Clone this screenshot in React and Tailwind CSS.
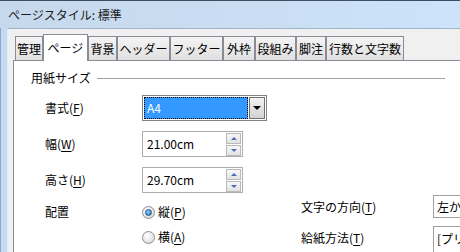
import React from "react";

const tabs = [
  { label: "管理", w: "w-[28px]" },
  { label: "ページ", w: "w-[45px]", active: true },
  { label: "背景", w: "w-[29px]" },
  { label: "ヘッダー", w: "w-[53px]" },
  { label: "フッター", w: "w-[53px]" },
  { label: "外枠", w: "w-[32px]" },
  { label: "段組み", w: "w-[41px]" },
  { label: "脚注", w: "w-[30px]" },
  { label: "行数と文字数", w: "w-[78px]" },
];

function Key({ children }) {
  return <span className="underline underline-offset-[2px]">{children}</span>;
}

function SpinBtn({ up }) {
  return (
    <div className="flex h-[11px] w-[15px] items-center justify-center border border-[#b9b9b9] bg-linear-to-b from-[#f7f7f7] to-[#e2e2e2]">
      {up ? (
        <div className="h-0 w-0 border-x-[3px] border-b-[3px] border-x-transparent border-b-[#4d6db3]" />
      ) : (
        <div className="h-0 w-0 border-x-[3px] border-t-[3px] border-x-transparent border-t-[#4d6db3]" />
      )}
    </div>
  );
}

function SpinField({ value }) {
  return (
    <div className="flex h-[26px] w-[101px] items-center border border-[#abadb3] bg-white pl-[4px] pr-[1px]">
      <span className="flex-1">{value}</span>
      <div className="flex flex-col gap-[1px]">
        <SpinBtn up />
        <SpinBtn />
      </div>
    </div>
  );
}

function Radio({ checked, children }) {
  return (
    <div className="flex h-[24px] items-center">
      <span className="mr-[3px] flex h-[13px] w-[13px] items-center justify-center rounded-full border border-[#8e8f8f] bg-[radial-gradient(circle_at_40%_35%,#ffffff,#d2d2d2)]">
        {checked && (
          <span className="h-[7px] w-[7px] rounded-full border border-[#1d5a93] bg-[radial-gradient(circle_at_40%_35%,#8fd3ff,#1d6bb5)]" />
        )}
      </span>
      <span>{children}</span>
    </div>
  );
}

export default function App() {
  return (
    <div className="flex h-[252px] w-[460px] flex-col overflow-hidden bg-[#f0f0f0] font-['Noto_Sans_CJK_JP','Noto_Sans',sans-serif] text-[12px] leading-none text-black">
      <div className="flex h-[28px] shrink-0 items-center border-t border-[#3f4d5e] bg-linear-to-r from-[#c6d8ec] to-[#cce3f9] pl-[8px] text-[#1b1b1b]">
        ページスタイル: 標準
      </div>
      <div className="flex min-h-0 flex-1">
        <div className="w-[7px] shrink-0 border-l border-[#8ea6c2] bg-[#c5daf0]" />
        <div className="flex min-w-0 flex-1 flex-col border-l border-t border-l-[#e3ecf7] border-t-[#a3b4c8] pl-[5px] pt-[5px]">
          <div className="ml-[2px] flex h-[26px] shrink-0">
            {tabs.map((t) =>
              t.active ? (
                <div
                  key={t.label}
                  className={`${t.w} relative z-10 flex h-[27px] items-center justify-center border border-b-0 border-[#898c95] bg-white`}
                >
                  {t.label}
                </div>
              ) : (
                <div
                  key={t.label}
                  className={`${t.w} mt-[2px] flex h-[24px] items-center justify-center border border-b-0 border-[#898c95] bg-linear-to-b from-[#f4f4f4] to-[#e0e0e0]`}
                >
                  {t.label}
                </div>
              )
            )}
          </div>
          <div className="flex-1 border-l border-t border-[#898c95] bg-white">
            <div className="ml-[17px] mt-[8px] flex h-[18px] w-[414px] items-center gap-[6px]">
              <span>用紙サイズ</span>
              <div className="h-px flex-1 bg-[#a0a0a0]" />
            </div>

            <div className="mt-[8px] flex h-[26px] items-center pl-[31px]">
              <span className="w-[97px]">
                書式(<Key>F</Key>)
              </span>
              <div className="flex h-[26px] w-[125px] border border-[#7e8289] bg-white p-[1px]">
                <div className="flex flex-1 items-center border border-dotted border-black bg-[#3399ff] pl-[2px] text-white">
                  A4
                </div>
                <div className="ml-[1px] flex w-[16px] items-center justify-center border border-[#707070] bg-linear-to-b from-[#f2f2f2] to-[#d2d2d2]">
                  <div className="h-0 w-0 border-x-[4px] border-t-[4px] border-x-transparent border-t-black" />
                </div>
              </div>
            </div>

            <div className="mt-[10px] flex h-[26px] items-center pl-[31px]">
              <span className="w-[97px]">
                幅(<Key>W</Key>)
              </span>
              <SpinField value="21.00cm" />
            </div>

            <div className="mt-[10px] flex h-[26px] items-center pl-[31px]">
              <span className="w-[97px]">
                高さ(<Key>H</Key>)
              </span>
              <SpinField value="29.70cm" />
            </div>

            <div className="mt-[2px] flex pl-[31px]">
              <div className="w-[97px] shrink-0 pt-[5px]">
                <div className="flex h-[24px] items-center">配置</div>
              </div>
              <div className="flex w-[159px] shrink-0 flex-col gap-[1px] pt-[5px]">
                <Radio checked>
                  縦(<Key>P</Key>)
                </Radio>
                <Radio>
                  横(<Key>A</Key>)
                </Radio>
              </div>
              <div className="flex shrink-0 flex-col">
                <div className="flex h-[23px] items-center">
                  <span className="w-[132px]">
                    文字の方向(<Key>T</Key>)
                  </span>
                  <div className="flex h-[23px] w-[150px] items-center border border-[#a0a0a0] pl-[3px] whitespace-nowrap">
                    左から右へ（横書き）
                  </div>
                </div>
                <div className="mt-[8px] flex items-start">
                  <span className="flex h-[24px] w-[132px] items-center">
                    給紙方法(<Key>T</Key>)
                  </span>
                  <div className="flex h-[30px] w-[150px] items-start border border-[#a0a0a0] pl-[3px] pt-[6px] whitespace-nowrap">
                    [プリンターの設定から]
                  </div>
                </div>
              </div>
            </div>
          </div>
        </div>
      </div>
    </div>
  );
}
